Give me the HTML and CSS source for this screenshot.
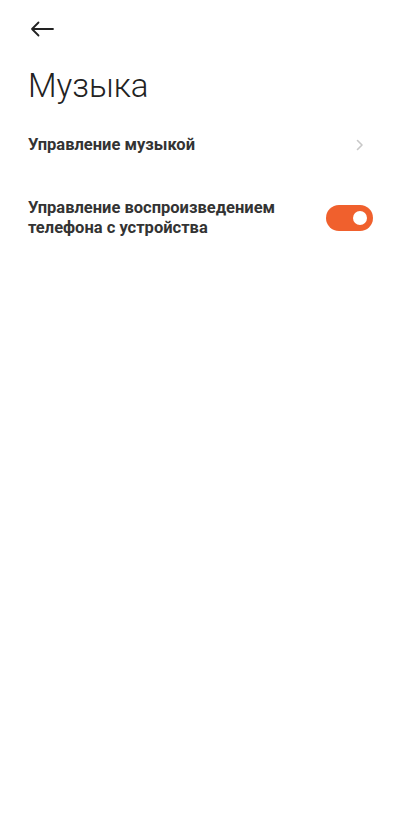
FILE: index.html
```
<!DOCTYPE html>
<html lang="ru">
<head>
<meta charset="utf-8">
<link rel="stylesheet" href="styles.css">
</head>
<body>
<div class="screen">
  <header class="topbar">
    <svg class="back" width="24" height="16" viewBox="0 0 24 16" fill="none" stroke="#222" stroke-width="1.8" stroke-linecap="round" stroke-linejoin="round">
      <path d="M23 8H2M8.5 1.5L2 8l6.5 6.5"/>
    </svg>
  </header>
  <h1 class="title">Музыка</h1>
  <div class="row row-one">
    <span class="label">Управление музыкой</span>
    <svg class="chev" width="8" height="12" viewBox="0 0 8 12" fill="none" stroke="#c8c8c8" stroke-width="1.6" stroke-linecap="round" stroke-linejoin="round">
      <path d="M1.5 1.5L6 6l-4.5 4.5"/>
    </svg>
  </div>
  <div class="row row-two">
    <span class="label">Управление воспроизведением телефона с устройства</span>
    <div class="toggle"><div class="knob"></div></div>
  </div>
</div>
</body>
</html>
```
FILE: styles.css
```
html, body {
  margin: 0;
  padding: 0;
  background: #fff;
}
.screen {
  width: 400px;
  font-family: Roboto, "Noto Sans", sans-serif;
  color: #2b2b2b;
}
.topbar {
  height: 58px;
  display: flex;
  align-items: center;
  padding-left: 30px;
}
.back {
  display: block;
}
.title {
  margin: 6px 0 0 28px;
  font-size: 33px;
  font-weight: 300;
  color: #222;
  line-height: 44px;
}
.row {
  display: flex;
  align-items: center;
  justify-content: space-between;
  padding: 0 27px 0 28px;
}
.row-one {
  margin-top: 16px;
  height: 42px;
}
.row-two {
  margin-top: 32px;
}
.label {
  font-size: 16.5px;
  font-weight: 700;
  color: #333;
  line-height: 20px;
}
.row-two .label {
  max-width: 260px;
}
.chev {
  margin-right: 9px;
}
.toggle {
  width: 47px;
  height: 26px;
  border-radius: 13px;
  background: #f0602d;
  position: relative;
  flex: none;
}
.knob {
  position: absolute;
  right: 6px;
  top: 6px;
  width: 14px;
  height: 14px;
  border-radius: 50%;
  background: #fff;
}
```
